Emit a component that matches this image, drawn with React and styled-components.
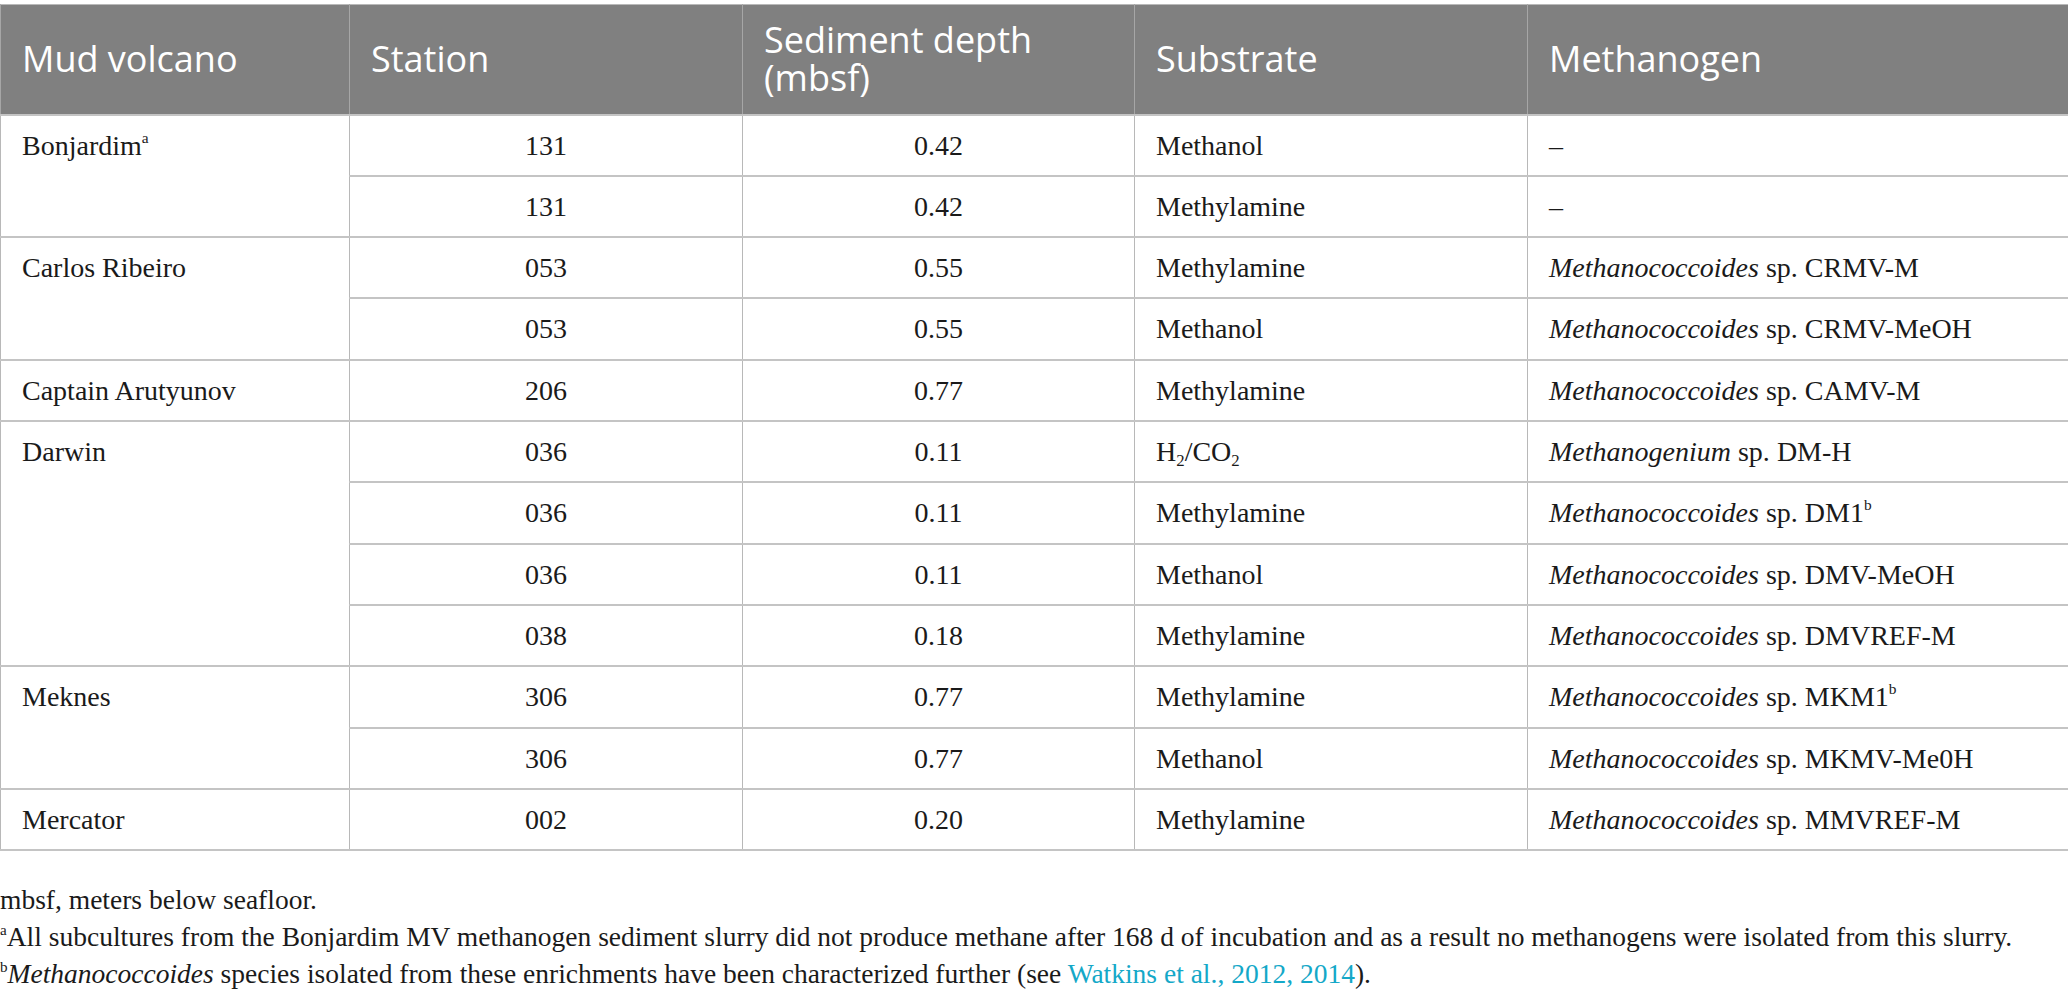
import React from 'react'
import styled, { createGlobalStyle } from 'styled-components'

const GlobalStyle = createGlobalStyle`
  html, body {
    margin: 0;
    padding: 0;
    background: #ffffff;
  }
  body {
    font-family: "Liberation Serif", "Times New Roman", serif;
    color: #1a1a1a;
  }
`

const Page = styled.div`
  padding-top: 4px;
  width: 2068px;
`

const Table = styled.table`
  width: 2068px;
  table-layout: fixed;
  border-collapse: collapse;
  border-top: 1px solid #b9b9b9;
`

const HeadCell = styled.th`
  height: 110px;
  box-sizing: border-box;
  padding: 0 21px;
  background: #808080;
  color: #ffffff;
  font-family: "Open Sans", "Noto Sans", sans-serif;
  font-weight: 400;
  font-size: 36px;
  line-height: 38px;
  text-align: left;
  vertical-align: middle;
  border-left: 1px solid #a6a6a6;
  border-right: 1px solid #a6a6a6;
  border-bottom: 2px solid #c4c4c4;
`

const Cell = styled.td`
  padding: 15px 21px;
  font-size: 28px;
  line-height: 29.33px;
  text-align: ${(p) => p.$align || 'left'};
  vertical-align: top;
  border-left: 1px solid #b8b8b8;
  border-right: 1px solid #b8b8b8;
  border-bottom: 2px solid #c4c4c4;
  white-space: nowrap;
`

const Sup = styled.sup`
  font-size: 0.55em;
  line-height: 0;
  vertical-align: 0.75em;
`

const Sub = styled.sub`
  font-size: 0.6em;
  line-height: 0;
  vertical-align: -0.3em;
`

const Notes = styled.div`
  margin-top: 30px;
  font-size: 27.5px;
  line-height: 37px;
`

const Note = styled.p`
  margin: 0;
  white-space: nowrap;
`

const Link = styled.a`
  color: #14a8c8;
  text-decoration: none;
`

const cols = [349, 393, 392, 393, 541]

const rows = [
  { volcano: <>Bonjardim<Sup>a</Sup></>, span: 2, station: '131', depth: '0.42', substrate: 'Methanol', genus: null, strain: '–' },
  { station: '131', depth: '0.42', substrate: 'Methylamine', genus: null, strain: '–' },
  { volcano: 'Carlos Ribeiro', span: 2, station: '053', depth: '0.55', substrate: 'Methylamine', genus: 'Methanococcoides', strain: 'CRMV-M' },
  { station: '053', depth: '0.55', substrate: 'Methanol', genus: 'Methanococcoides', strain: 'CRMV-MeOH' },
  { volcano: 'Captain Arutyunov', span: 1, station: '206', depth: '0.77', substrate: 'Methylamine', genus: 'Methanococcoides', strain: 'CAMV-M' },
  { volcano: 'Darwin', span: 4, station: '036', depth: '0.11', substrate: <>H<Sub>2</Sub>/CO<Sub>2</Sub></>, genus: 'Methanogenium', strain: 'DM-H' },
  { station: '036', depth: '0.11', substrate: 'Methylamine', genus: 'Methanococcoides', strain: <>DM1<Sup>b</Sup></> },
  { station: '036', depth: '0.11', substrate: 'Methanol', genus: 'Methanococcoides', strain: 'DMV-MeOH' },
  { station: '038', depth: '0.18', substrate: 'Methylamine', genus: 'Methanococcoides', strain: 'DMVREF-M' },
  { volcano: 'Meknes', span: 2, station: '306', depth: '0.77', substrate: 'Methylamine', genus: 'Methanococcoides', strain: <>MKM1<Sup>b</Sup></> },
  { station: '306', depth: '0.77', substrate: 'Methanol', genus: 'Methanococcoides', strain: 'MKMV-Me0H' },
  { volcano: 'Mercator', span: 1, station: '002', depth: '0.20', substrate: 'Methylamine', genus: 'Methanococcoides', strain: 'MMVREF-M' },
]

function Methanogen({ genus, strain }) {
  if (!genus) return strain
  return <><i>{genus}</i> sp. {strain}</>
}

export default function App() {
  return (
    <Page>
      <GlobalStyle />
      <Table>
        <colgroup>
          {cols.map((w, i) => <col key={i} style={{ width: w }} />)}
        </colgroup>
        <thead>
          <tr>
            <HeadCell>Mud volcano</HeadCell>
            <HeadCell>Station</HeadCell>
            <HeadCell>Sediment depth<br />(mbsf)</HeadCell>
            <HeadCell>Substrate</HeadCell>
            <HeadCell>Methanogen</HeadCell>
          </tr>
        </thead>
        <tbody>
          {rows.map((r, i) => (
            <tr key={i}>
              {r.volcano && <Cell rowSpan={r.span}>{r.volcano}</Cell>}
              <Cell $align="center">{r.station}</Cell>
              <Cell $align="center">{r.depth}</Cell>
              <Cell>{r.substrate}</Cell>
              <Cell><Methanogen genus={r.genus} strain={r.strain} /></Cell>
            </tr>
          ))}
        </tbody>
      </Table>
      <Notes>
        <Note>mbsf, meters below seafloor.</Note>
        <Note><Sup>a</Sup>All subcultures from the Bonjardim MV methanogen sediment slurry did not produce methane after 168 d of incubation and as a result no methanogens were isolated from this slurry.</Note>
        <Note><Sup>b</Sup><i>Methanococcoides</i> species isolated from these enrichments have been characterized further (see <Link href="#">Watkins et al., 2012, 2014</Link>).</Note>
      </Notes>
    </Page>
  )
}
